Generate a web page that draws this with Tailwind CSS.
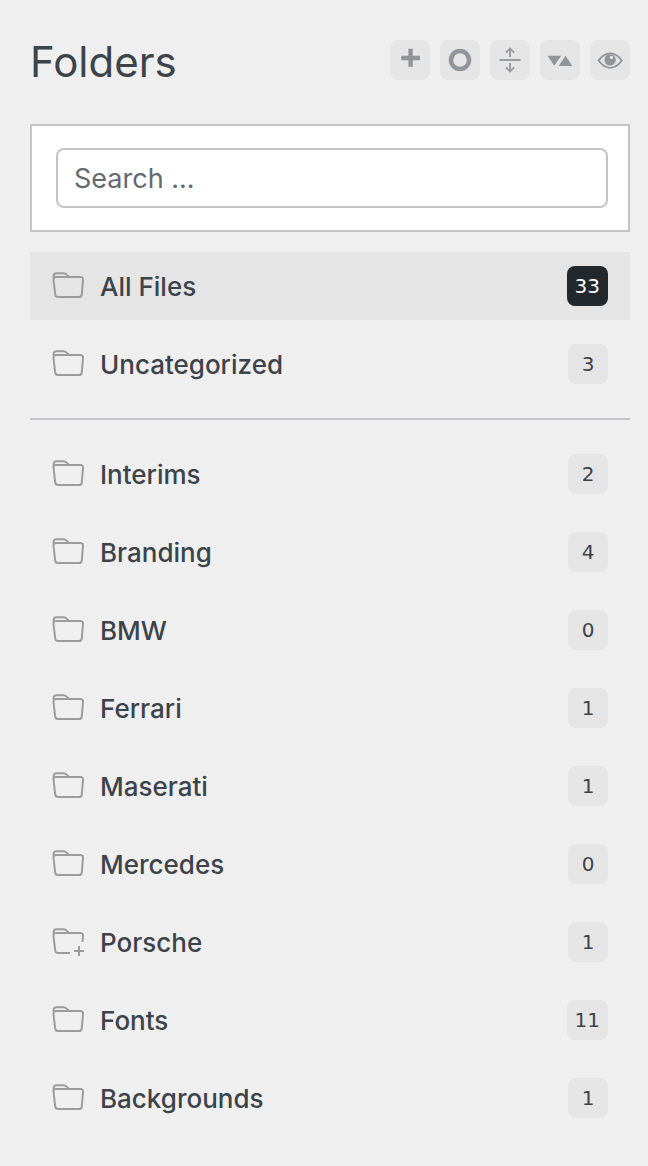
<!DOCTYPE html>
<html lang="en">
<head>
    <meta charset="UTF-8">
    <meta name="viewport" content="width=device-width, initial-scale=1.0">
    <title>Folders</title>
    <script src="https://cdn.jsdelivr.net/npm/@tailwindcss/browser@4"></script>
</head>
<body class="min-h-screen bg-[#efefef] font-['Inter',sans-serif] text-[#3c434a]">

    <!-- Folder icons shared by every row -->
    <svg class="hidden">
        <symbol id="folder" viewBox="0 0 32 28" fill="none" stroke="#9c9c9c" stroke-width="2" stroke-linejoin="round" stroke-linecap="round">
            <path d="M1.6 8V4Q1.6 1.2 4.4 1.2H11.5Q13.3 1.2 14.4 2.4L16.8 4.9H28Q31.2 4.9 31 8L29.8 22.3Q29.6 25 27 25H6.2Q3.5 25 3.2 22.3L1.5 8Q1.3 4.9 4.4 4.9H16.8"/>
        </symbol>
        <symbol id="folder-add" viewBox="0 0 32 28" fill="none" stroke="#9c9c9c" stroke-width="2" stroke-linejoin="round">
            <path d="M18 25H6.2Q3.5 25 3.2 22.3L1.5 8Q1.3 4.9 4.4 4.9H28Q31.2 4.9 31 8L30.5 14M1.6 8V4Q1.6 1.2 4.4 1.2H11.5Q13.3 1.2 14.4 2.4L16.8 4.9M27 18V28M22 23H32"/>
        </symbol>
    </svg>

    <main class="pt-10 pr-[18px] pb-8 pl-[30px]">
        <header class="flex h-10 items-start justify-between">
            <h1 class="text-[42px] leading-11">Folders</h1>
            <div class="flex gap-[10px]">
                <button type="button" aria-label="Add folder" class="size-10 rounded-lg bg-[#e5e5e5]">
                    <svg viewBox="0 0 40 40" fill="none" stroke="#909599" stroke-width="4.4"><path d="M20.6 8.8V26.8M11.3 18H30"/></svg>
                </button>
                <button type="button" aria-label="Select" class="size-10 rounded-lg bg-[#e5e5e5]">
                    <svg viewBox="0 0 40 40" fill="none" stroke="#909599" stroke-width="4.5"><circle cx="20" cy="20" r="9"/></svg>
                </button>
                <button type="button" aria-label="Expand" class="size-10 rounded-lg bg-[#e5e5e5]">
                    <svg viewBox="0 0 40 40" fill="none" stroke="#999d9f" stroke-width="1.9"><path d="M9.5 20H30.5M20 17V8.5M15.9 12.6L20 8.5L24.1 12.6M20 23V31.5M15.9 27.4L20 31.5L24.1 27.4"/></svg>
                </button>
                <button type="button" aria-label="Sort" class="size-10 rounded-lg bg-[#e5e5e5]">
                    <svg viewBox="0 0 40 40" fill="#909599"><path d="M7.5 15.7H21.2L14.3 25.7ZM18.6 25.9H32.4L25.5 15.7Z"/></svg>
                </button>
                <button type="button" aria-label="Show or hide" class="size-10 rounded-lg bg-[#e5e5e5]">
                    <svg viewBox="0 0 40 40" fill="none" stroke="#909599" stroke-width="1.8"><path d="M8.6 20.6Q13.5 13.4 20.2 13.4T31.8 20.6Q26.8 27.8 20.2 27.8T8.6 20.6Z"/><circle cx="20.1" cy="19.9" r="5.7" fill="#909599" stroke="none"/><circle cx="21.5" cy="17.4" r="1.7" fill="#e5e5e5" stroke="none"/></svg>
                </button>
            </div>
        </header>

        <form class="mt-11 border-2 border-[#c3c4c7] bg-white py-[22px] pr-5 pl-6">
            <input type="search" aria-label="Search folders" placeholder="Search ..." class="block h-[60px] w-full rounded-lg border-2 border-[#c3c4c7] bg-white px-4 text-[27px] placeholder:text-[#646970]">
        </form>

        <nav aria-label="Folders" class="mt-5 text-[26px] font-medium">
            <ul class="space-y-[10px]">
                <li><a href="#" class="flex h-[68px] items-center bg-[#e5e5e5] px-[22px]">
                    <svg class="mr-4 h-7 w-8"><use href="#folder"/></svg>
                    <span class="grow">All Files</span>
                    <span class="h-10 min-w-10 rounded-lg bg-[#23282d] px-2 text-center font-['DejaVu_Sans',sans-serif] text-xl leading-10 font-normal text-white">33</span>
                </a></li>
                <li><a href="#" class="flex h-[68px] items-center px-[22px]">
                    <svg class="mr-4 h-7 w-8"><use href="#folder"/></svg>
                    <span class="grow">Uncategorized</span>
                    <span class="h-10 min-w-10 rounded-lg bg-[#e5e5e5] px-2 text-center font-['DejaVu_Sans',sans-serif] text-xl leading-10 font-normal">3</span>
                </a></li>
            </ul>
            <hr class="my-5 border-t-2 border-[#c3c4c7]">
            <ul class="space-y-[10px]">
                <li><a href="#" class="flex h-[68px] items-center px-[22px]">
                    <svg class="mr-4 h-7 w-8"><use href="#folder"/></svg>
                    <span class="grow">Interims</span>
                    <span class="h-10 min-w-10 rounded-lg bg-[#e5e5e5] px-2 text-center font-['DejaVu_Sans',sans-serif] text-xl leading-10 font-normal">2</span>
                </a></li>
                <li><a href="#" class="flex h-[68px] items-center px-[22px]">
                    <svg class="mr-4 h-7 w-8"><use href="#folder"/></svg>
                    <span class="grow">Branding</span>
                    <span class="h-10 min-w-10 rounded-lg bg-[#e5e5e5] px-2 text-center font-['DejaVu_Sans',sans-serif] text-xl leading-10 font-normal">4</span>
                </a></li>
                <li><a href="#" class="flex h-[68px] items-center px-[22px]">
                    <svg class="mr-4 h-7 w-8"><use href="#folder"/></svg>
                    <span class="grow">BMW</span>
                    <span class="h-10 min-w-10 rounded-lg bg-[#e5e5e5] px-2 text-center font-['DejaVu_Sans',sans-serif] text-xl leading-10 font-normal">0</span>
                </a></li>
                <li><a href="#" class="flex h-[68px] items-center px-[22px]">
                    <svg class="mr-4 h-7 w-8"><use href="#folder"/></svg>
                    <span class="grow">Ferrari</span>
                    <span class="h-10 min-w-10 rounded-lg bg-[#e5e5e5] px-2 text-center font-['DejaVu_Sans',sans-serif] text-xl leading-10 font-normal">1</span>
                </a></li>
                <li><a href="#" class="flex h-[68px] items-center px-[22px]">
                    <svg class="mr-4 h-7 w-8"><use href="#folder"/></svg>
                    <span class="grow">Maserati</span>
                    <span class="h-10 min-w-10 rounded-lg bg-[#e5e5e5] px-2 text-center font-['DejaVu_Sans',sans-serif] text-xl leading-10 font-normal">1</span>
                </a></li>
                <li><a href="#" class="flex h-[68px] items-center px-[22px]">
                    <svg class="mr-4 h-7 w-8"><use href="#folder"/></svg>
                    <span class="grow">Mercedes</span>
                    <span class="h-10 min-w-10 rounded-lg bg-[#e5e5e5] px-2 text-center font-['DejaVu_Sans',sans-serif] text-xl leading-10 font-normal">0</span>
                </a></li>
                <li><a href="#" class="flex h-[68px] items-center px-[22px]">
                    <svg class="mr-4 h-7 w-8"><use href="#folder-add"/></svg>
                    <span class="grow">Porsche</span>
                    <span class="h-10 min-w-10 rounded-lg bg-[#e5e5e5] px-2 text-center font-['DejaVu_Sans',sans-serif] text-xl leading-10 font-normal">1</span>
                </a></li>
                <li><a href="#" class="flex h-[68px] items-center px-[22px]">
                    <svg class="mr-4 h-7 w-8"><use href="#folder"/></svg>
                    <span class="grow">Fonts</span>
                    <span class="h-10 min-w-10 rounded-lg bg-[#e5e5e5] px-2 text-center font-['DejaVu_Sans',sans-serif] text-xl leading-10 font-normal">11</span>
                </a></li>
                <li><a href="#" class="flex h-[68px] items-center px-[22px]">
                    <svg class="mr-4 h-7 w-8"><use href="#folder"/></svg>
                    <span class="grow">Backgrounds</span>
                    <span class="h-10 min-w-10 rounded-lg bg-[#e5e5e5] px-2 text-center font-['DejaVu_Sans',sans-serif] text-xl leading-10 font-normal">1</span>
                </a></li>
            </ul>
        </nav>
    </main>
</body>
</html>
